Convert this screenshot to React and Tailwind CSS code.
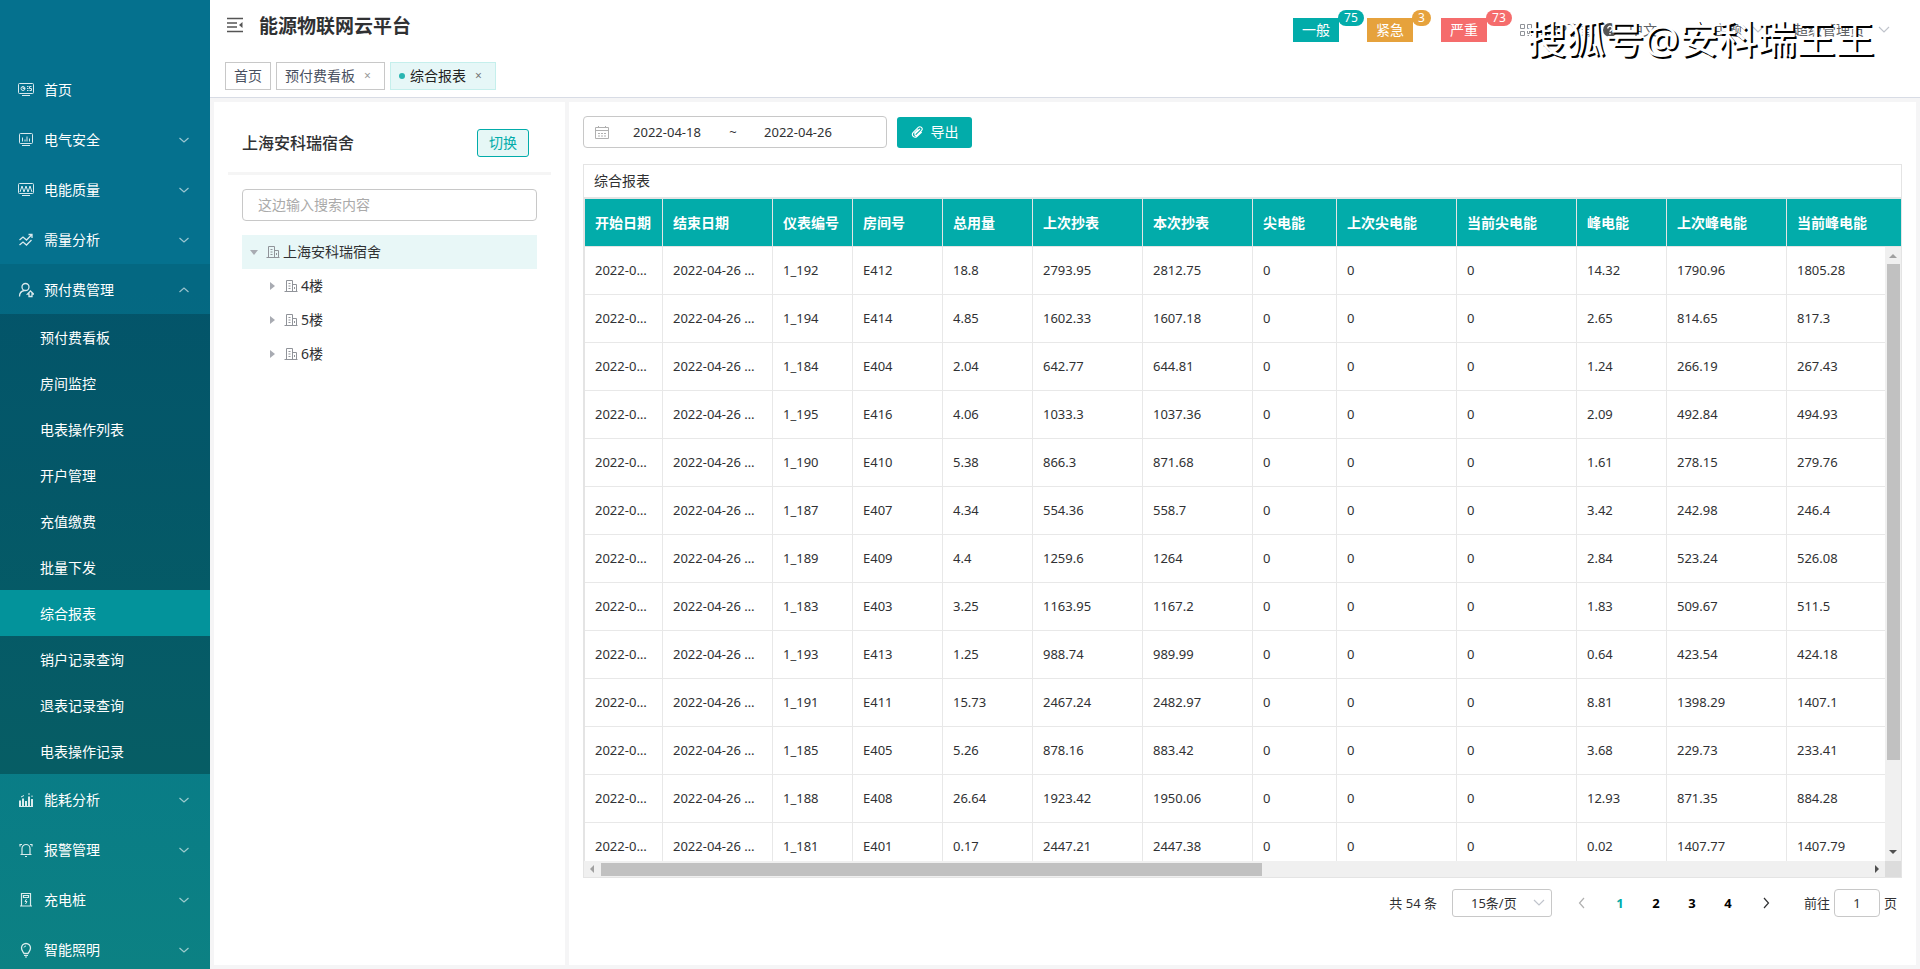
import React, { useState } from "react";

const icons = {
  home: (
    <>
      <rect x="0.5" y="1.5" width="15" height="10" rx="1" />
      <circle cx="5" cy="6.5" r="2" />
      <path d="M5 4.5v2h2M9 4.5h1.5M9 6.5h1.5M9 8.5h1.5M13.5 4.5h-2v2h2v2h-2M4 13.5h8" />
    </>
  ),
  safety: (
    <>
      <rect x="1.5" y="1.5" width="13" height="10" rx="1" />
      <path d="M4.5 9.5v-4M7 9.5v-2M9 9.5v-5M11.5 9.5v-3M4 13.5h8" />
    </>
  ),
  quality: (
    <>
      <rect x="0.5" y="1.5" width="15" height="10" rx="1" />
      <path d="M2 10l2-6 2 6 2-6 2 6 2-6 2 6M4 13.5h8" />
    </>
  ),
  demand: (
    <path
      d="M1.5 8l3.500-3 3.500 3L13.500 3M10.500 2.500H14V6M1.500 13l3.500-3 3.500 3 5-5"
      strokeWidth="1.3"
    />
  ),
  prepaid: (
    <>
      <circle cx="7.5" cy="5" r="3.500" strokeWidth="1.3" />
      <path
        d="M1.5 14.500c0-3 2-5.500 5-6M12.500 9l3 3H14v2.500h-3V12H9.500z"
        strokeWidth="1.3"
      />
    </>
  ),
  energy: (
    <>
      <path d="M2 14V8.500M5 14V6.500M8 14V9M11 14V4.500M14 14V7" strokeWidth="2" />
      <path d="M1 14.500h14M3 5l3-1.500M11 3V1M14 5V3.500" />
    </>
  ),
  alarm: (
    <path
      d="M4 12V6.500a4 4 0 018 0V12M2.500 12.500h11M7 14.500h2M2 4.500V2.500h2M14 4.500V2.500h-2"
      strokeWidth="1.2"
    />
  ),
  charger: (
    <>
      <path d="M3.500 13.500v-12h9v12M2 14h12M5.500 3.500h5v2h-5z" strokeWidth="1.2" />
      <path d="M8.500 7l-1.500 2.500h2L7.500 12" />
    </>
  ),
  light: (
    <>
      <path
        d="M6 11.500C5 9.500 3.500 8.500 3.500 6a4.500 4.500 0 019 0c0 2.500-1.500 3.500-2.500 5.500z"
        strokeWidth="1.3"
      />
      <path d="M6 13.500h4M7 15h2M6 5.500A2 2 0 018 4" />
    </>
  ),
};

const menu = [
  { name: "首页", icon: "home", leaf: true },
  { name: "电气安全", icon: "safety" },
  { name: "电能质量", icon: "quality" },
  { name: "需量分析", icon: "demand" },
  {
    name: "预付费管理",
    icon: "prepaid",
    children: [
      "预付费看板",
      "房间监控",
      "电表操作列表",
      "开户管理",
      "充值缴费",
      "批量下发",
      "综合报表",
      "销户记录查询",
      "退表记录查询",
      "电表操作记录",
    ],
  },
  { name: "能耗分析", icon: "energy" },
  { name: "报警管理", icon: "alarm" },
  { name: "充电桩", icon: "charger" },
  { name: "智能照明", icon: "light" },
];

const columns = [
  { title: "开始日期", width: "w-[78px]" },
  { title: "结束日期", width: "w-[110px]" },
  { title: "仪表编号", width: "w-[80px]" },
  { title: "房间号", width: "w-[90px]" },
  { title: "总用量", width: "w-[90px]" },
  { title: "上次抄表", width: "w-[110px]" },
  { title: "本次抄表", width: "w-[110px]" },
  { title: "尖电能", width: "w-[84px]" },
  { title: "上次尖电能", width: "w-[120px]" },
  { title: "当前尖电能", width: "w-[120px]" },
  { title: "峰电能", width: "w-[90px]" },
  { title: "上次峰电能", width: "w-[120px]" },
  { title: "当前峰电能", width: "" },
];

// meter, room, total, last reading, current reading, peak, last peak, current peak
const readings = [
  ["1_192", "E412", "18.8", "2793.95", "2812.75", "14.32", "1790.96", "1805.28"],
  ["1_194", "E414", "4.85", "1602.33", "1607.18", "2.65", "814.65", "817.3"],
  ["1_184", "E404", "2.04", "642.77", "644.81", "1.24", "266.19", "267.43"],
  ["1_195", "E416", "4.06", "1033.3", "1037.36", "2.09", "492.84", "494.93"],
  ["1_190", "E410", "5.38", "866.3", "871.68", "1.61", "278.15", "279.76"],
  ["1_187", "E407", "4.34", "554.36", "558.7", "3.42", "242.98", "246.4"],
  ["1_189", "E409", "4.4", "1259.6", "1264", "2.84", "523.24", "526.08"],
  ["1_183", "E403", "3.25", "1163.95", "1167.2", "1.83", "509.67", "511.5"],
  ["1_193", "E413", "1.25", "988.74", "989.99", "0.64", "423.54", "424.18"],
  ["1_191", "E411", "15.73", "2467.24", "2482.97", "8.81", "1398.29", "1407.1"],
  ["1_185", "E405", "5.26", "878.16", "883.42", "3.68", "229.73", "233.41"],
  ["1_188", "E408", "26.64", "1923.42", "1950.06", "12.93", "871.35", "884.28"],
  ["1_181", "E401", "0.17", "2447.21", "2447.38", "0.02", "1407.77", "1407.79"],
];

const rows = readings.map((r) => [
  "2022-04-18 00:00:00",
  "2022-04-26 00:00:00",
  ...r.slice(0, 5),
  "0",
  "0",
  "0",
  ...r.slice(5),
]);

const Chevron = ({ className, d = "M1 3l5 5 5-5" }) => (
  <svg
    viewBox="0 0 12 12"
    className={className}
    fill="none"
    stroke="currentColor"
    strokeWidth="1.2"
  >
    <path d={d} />
  </svg>
);

const Triangle = ({ className, d }) => (
  <svg viewBox="0 0 8 8" className={className} fill="currentColor">
    <path d={d} />
  </svg>
);

const BuildingIcon = () => (
  <svg
    viewBox="0 0 14 14"
    className="mr-[3px] h-[14px] w-[14px] text-[#909399]"
    fill="none"
    stroke="currentColor"
  >
    <path d="M0.5 12.500h13M2.500 12.500v-11h6v11M8.500 5.500h4v7M4.500 4.500h2M4.500 7h2M4.500 9.500h2M10.500 8v2" />
  </svg>
);

const Sidebar = () => {
  const [active, setActive] = useState("综合报表");

  return (
    <nav className="w-[210px] shrink-0 overflow-hidden bg-linear-to-b from-[#05718e] from-30% to-[#0c8183] pt-16 text-white">
      {menu.map((item) => (
        <div key={item.name}>
          <button
            className={`flex h-[50px] w-full items-center pt-[2px] pr-5 pl-[18px] text-left ${
              item.children ? "bg-black/8" : ""
            }`}
          >
            <svg
              viewBox="0 0 16 16"
              className="mr-[10px] h-4 w-4 opacity-85"
              fill="none"
              stroke="currentColor"
            >
              {icons[item.icon]}
            </svg>
            <span className="flex-1">{item.name}</span>
            {!item.leaf && (
              <Chevron
                className="h-3 w-3 opacity-60"
                d={item.children ? "M1.500 8l4.500-4 4.500 4" : "M1.500 4l4.500 4 4.500-4"}
              />
            )}
          </button>
          {item.children && (
            <div className="bg-black/25">
              {item.children.map((child) => (
                <button
                  key={child}
                  onClick={() => setActive(child)}
                  className={`flex h-[46px] w-full items-center pt-[2px] pl-10 ${
                    active === child ? "bg-[#03939b]" : ""
                  }`}
                >
                  {child}
                </button>
              ))}
            </div>
          )}
        </div>
      ))}
    </nav>
  );
};

const AlarmButton = ({ label, count, color }) => (
  <button
    className={`relative flex h-6 w-[46px] items-center justify-center text-white ${color}`}
  >
    {label}
    <span
      className={`absolute -top-2 left-[45px] flex h-4 items-center rounded-full px-[6px] text-xs ${color}`}
    >
      {count}
    </span>
  </button>
);

const Header = () => (
  <header className="h-[98px] border-b border-[#d8dce5] bg-white">
    <div className="flex h-[54px] items-start pr-[30px] pl-[17px]">
      <button aria-label="收起菜单" className="mt-[17px]">
        <svg
          viewBox="0 0 16 16"
          className="h-4 w-4 text-[#555]"
          fill="none"
          stroke="currentColor"
          strokeWidth="1.400"
        >
          <path d="M0 1.500h16M0 6h10M0 10h10M0 14.500h16" />
          <path d="M15.500 5v6L12 8z" fill="currentColor" stroke="none" />
        </svg>
      </button>
      <h1 className="ml-4 pt-3 text-[19px] leading-7 font-bold text-[#303133]">
        能源物联网云平台
      </h1>
      <div className="mt-[18px] ml-auto flex gap-7">
        <AlarmButton label="一般" count="75" color="bg-[#02acaa]" />
        <AlarmButton label="紧急" count="3" color="bg-[#e6a23c]" />
        <AlarmButton label="严重" count="73" color="bg-[#f56c6c]" />
      </div>
      <div className="relative mt-5 ml-8 flex items-center text-[#606266]">
        <svg
          viewBox="0 0 14 14"
          className="mr-2 h-[14px] w-[14px] text-[#909399]"
          fill="none"
          stroke="currentColor"
        >
          <path d="M1.500 1.500h4v4h-4zM8.500 1.500h4v4h-4zM1.500 8.500h4v4h-4zM8.500 8v2.500h2V8M12.500 8v2M8.500 12.500h1.500M12.500 12v1" />
        </svg>
        <a href="#app">APP下载</a>
        <svg viewBox="0 0 14 14" className="mr-3 ml-2 h-[14px] w-[14px]">
          <circle cx="7" cy="7" r="7" fill="#555" />
          <path
            d="M4.800 5.500a2.200 2.200 0 114 1.200C8.200 7.300 7 7.500 7 8.800M7 10v1.500"
            fill="none"
            stroke="#fff"
            strokeWidth="1.400"
          />
        </svg>
        <button className="w-[85px] text-left">中文</button>
        <button className="flex w-20 items-center">
          主题
          <Chevron className="ml-[10px] h-3 w-3 text-[#c0c4cc]" />
        </button>
        <button className="flex items-center">
          超级管理员
          <Chevron className="ml-[14px] h-3 w-3 text-[#c0c4cc]" />
        </button>
        <span className="pointer-events-none absolute -top-[6px] left-2 text-[39px] leading-[48px] whitespace-nowrap text-white [text-shadow:2px_2px_0_#000]">
          搜狐号@安科瑞王王
        </span>
      </div>
    </div>
    <div className="flex gap-[5px] px-[15px] pt-2 text-[#495060]">
      <a href="#home" className="flex h-7 items-center border border-[#c8c8c8] px-2">
        首页
      </a>
      <a
        href="#board"
        className="flex h-7 items-center border border-[#c8c8c8] pr-3 pl-2"
      >
        预付费看板
        <span className="ml-[9px] w-2 text-xs text-[#999]">×</span>
      </a>
      <a
        href="#report"
        className="flex h-7 items-center border border-[#c5efec] bg-[#e6f7f7] pr-3 pl-2 text-[#222]"
      >
        <i className="mr-[5px] h-[6px] w-[6px] rounded-full bg-[#2ab5b1]" />
        综合报表
        <span className="ml-[9px] w-2 text-xs text-[#777]">×</span>
      </a>
    </div>
  </header>
);

const BuildingPanel = () => (
  <aside className="w-[351px] shrink-0 bg-white px-[14px] pt-[27px]">
    <div className="flex h-[46px] items-start justify-between border-b-[3px] border-[#f5f5f5] pr-[22px] pl-[14px]">
      <h2 className="text-base leading-7 font-medium text-[#303133]">
        上海安科瑞宿舍
      </h2>
      <button className="h-7 w-[52px] rounded-[3px] border border-[#02acaa] bg-[#e6f7f6] text-[#02acaa]">
        切换
      </button>
    </div>
    <div className="px-[14px] pt-[14px]">
      <input
        type="text"
        aria-label="搜索"
        placeholder="这边输入搜索内容"
        className="h-8 w-full rounded border border-[#c8c8c8] px-[15px] pb-[2px] placeholder:text-[#aaa]"
      />
      <ul className="mt-[14px] text-[#303133]">
        <li className="flex h-[34px] items-center bg-[#e8f7f7] pl-2">
          <Triangle className="mr-2 h-2 w-2 text-[#a8abb2]" d="M0 2h8L4 7z" />
          <BuildingIcon />
          上海安科瑞宿舍
        </li>
        {["4楼", "5楼", "6楼"].map((floor) => (
          <li key={floor} className="flex h-[34px] items-center pl-[26px]">
            <Triangle className="mr-2 h-2 w-2 text-[#a8abb2]" d="M2 0v8l5-4z" />
            <BuildingIcon />
            {floor}
          </li>
        ))}
      </ul>
    </div>
  </aside>
);

const ReportTable = () => (
  <div className="mt-4 flex min-h-0 flex-1 flex-col border border-[#e4e4e4]">
    <h3 className="h-8 shrink-0 px-[10px] leading-[31px] text-[#303133]">综合报表</h3>
    <div className="relative min-h-0 flex-1 overflow-hidden border-t-2 border-l border-[#e4e4e4]">
      <table className="w-full table-fixed border-separate border-spacing-0">
        <thead>
          <tr className="h-12 bg-[#02acaa] text-left text-white">
            {columns.map((col) => (
              <th
                key={col.title}
                className={`border-r border-b border-[#e4e4e4] px-[10px] font-bold last:border-r-0 ${col.width}`}
              >
                {col.title}
              </th>
            ))}
          </tr>
        </thead>
        <tbody className="text-[13px] text-[#303133]">
          {rows.map((row) => (
            <tr key={row[2]} className="h-12">
              {row.map((value, i) => (
                <td
                  key={i}
                  className="truncate border-r border-b border-[#e8e8e8] pr-[13px] pl-[10px] last:border-r-0"
                >
                  {value}
                </td>
              ))}
            </tr>
          ))}
        </tbody>
      </table>
      <div className="absolute top-12 right-0 bottom-0 flex w-4 flex-col items-center bg-[#f0f0f0] py-[5px]">
        <Triangle className="h-2 w-2 shrink-0 text-[#a0a0a0]" d="M0 6h8L4 2z" />
        <div className="mt-1 min-h-0 w-[13px] flex-1">
          <div className="h-[85%] bg-[#c1c1c1]" />
        </div>
        <Triangle className="h-2 w-2 shrink-0 text-[#505050]" d="M0 2h8L4 6z" />
      </div>
    </div>
    <div className="flex h-4 shrink-0 items-center bg-[#f0f0f0] pl-1">
      <Triangle className="mr-[5px] h-2 w-2 shrink-0 text-[#a0a0a0]" d="M6 0v8L2 4z" />
      <div className="h-[13px] flex-1">
        <div className="h-full w-[52%] bg-[#c1c1c1]" />
      </div>
      <Triangle className="mr-1 h-2 w-2 shrink-0 text-[#505050]" d="M2 0v8l4-4z" />
      <div className="h-full w-4 bg-[#dcdcdc]" />
    </div>
  </div>
);

const Pagination = () => {
  const [page, setPage] = useState(1);

  return (
    <div className="mt-[11px] flex h-7 shrink-0 items-center justify-end pr-[5px] text-[13px] text-[#303133]">
      <span>共 54 条</span>
      <div className="relative mr-[10px] ml-[15px]">
        <select
          aria-label="每页条数"
          className="h-7 w-[100px] appearance-none rounded-[3px] border border-[#c8c8c8] pl-[18px]"
        >
          <option>15条/页</option>
        </select>
        <Chevron className="pointer-events-none absolute top-2 right-[7px] h-3 w-3 text-[#c0c4cc]" />
      </div>
      <button aria-label="上一页" className="flex w-10 justify-center text-[#b0b0b0]">
        <Chevron className="h-3 w-3" d="M8 1L3.500 6 8 11" />
      </button>
      {[1, 2, 3, 4].map((n) => (
        <button
          key={n}
          onClick={() => setPage(n)}
          className={`w-9 text-center font-bold ${
            page === n ? "text-[#02acaa]" : "text-black"
          }`}
        >
          {n}
        </button>
      ))}
      <button aria-label="下一页" className="flex w-10 justify-center">
        <Chevron className="h-3 w-3" d="M4 1l4.500 5L4 11" />
      </button>
      <label className="ml-[18px] flex items-center gap-1">
        前往
        <input
          type="text"
          defaultValue="1"
          className="h-7 w-[46px] rounded border border-[#c8c8c8] text-center"
        />
        页
      </label>
    </div>
  );
};

const ReportPanel = () => (
  <main className="flex min-w-0 flex-1 flex-col bg-white px-[14px] pt-[14px] pb-12">
    <div className="flex shrink-0 items-center gap-[10px]">
      <div className="flex h-8 w-[304px] items-center rounded border border-[#c8c8c8] pl-[11px] text-[13px] text-[#303133]">
        <svg
          viewBox="0 0 14 14"
          className="h-[14px] w-[14px] text-[#b0b0b0]"
          fill="none"
          stroke="currentColor"
        >
          <path d="M0.500 2.500h13v11H0.500zM0.500 5.500h13M3.500 1v2M10.500 1v2M3 8.500h2M6 8.500h2M9 8.500h2M3 11h2M6 11h2M9 11h2" />
        </svg>
        <input
          type="text"
          aria-label="开始日期"
          defaultValue="2022-04-18"
          className="w-[116px] text-center"
        />
        <span className="w-4 text-center">~</span>
        <input
          type="text"
          aria-label="结束日期"
          defaultValue="2022-04-26"
          className="w-[114px] text-center"
        />
      </div>
      <button className="flex h-[31px] w-[75px] items-center justify-center gap-2 rounded-[3px] bg-[#02acaa] text-white">
        <svg
          viewBox="0 0 14 14"
          className="h-3 w-3"
          fill="none"
          stroke="currentColor"
          strokeWidth="1.300"
        >
          <path d="M10.500 3.500L5 9a1.200 1.200 0 001.800 1.800l5.400-5.400a2.600 2.600 0 00-3.700-3.700L2.400 7.800a3.200 3.200 0 004.500 4.500L12.500 7M8.500 4L3.800 8.700" />
        </svg>
        导出
      </button>
    </div>
    <ReportTable />
    <Pagination />
  </main>
);

const App = () => (
  <div className="flex h-screen overflow-hidden bg-[#f5f5f6] font-['Noto_Sans','Noto_Sans_CJK_SC',sans-serif] text-sm">
    <Sidebar />
    <div className="flex min-w-0 flex-1 flex-col">
      <Header />
      <div className="flex min-h-0 flex-1 gap-1 p-1">
        <BuildingPanel />
        <ReportPanel />
      </div>
    </div>
  </div>
);

export default App;
